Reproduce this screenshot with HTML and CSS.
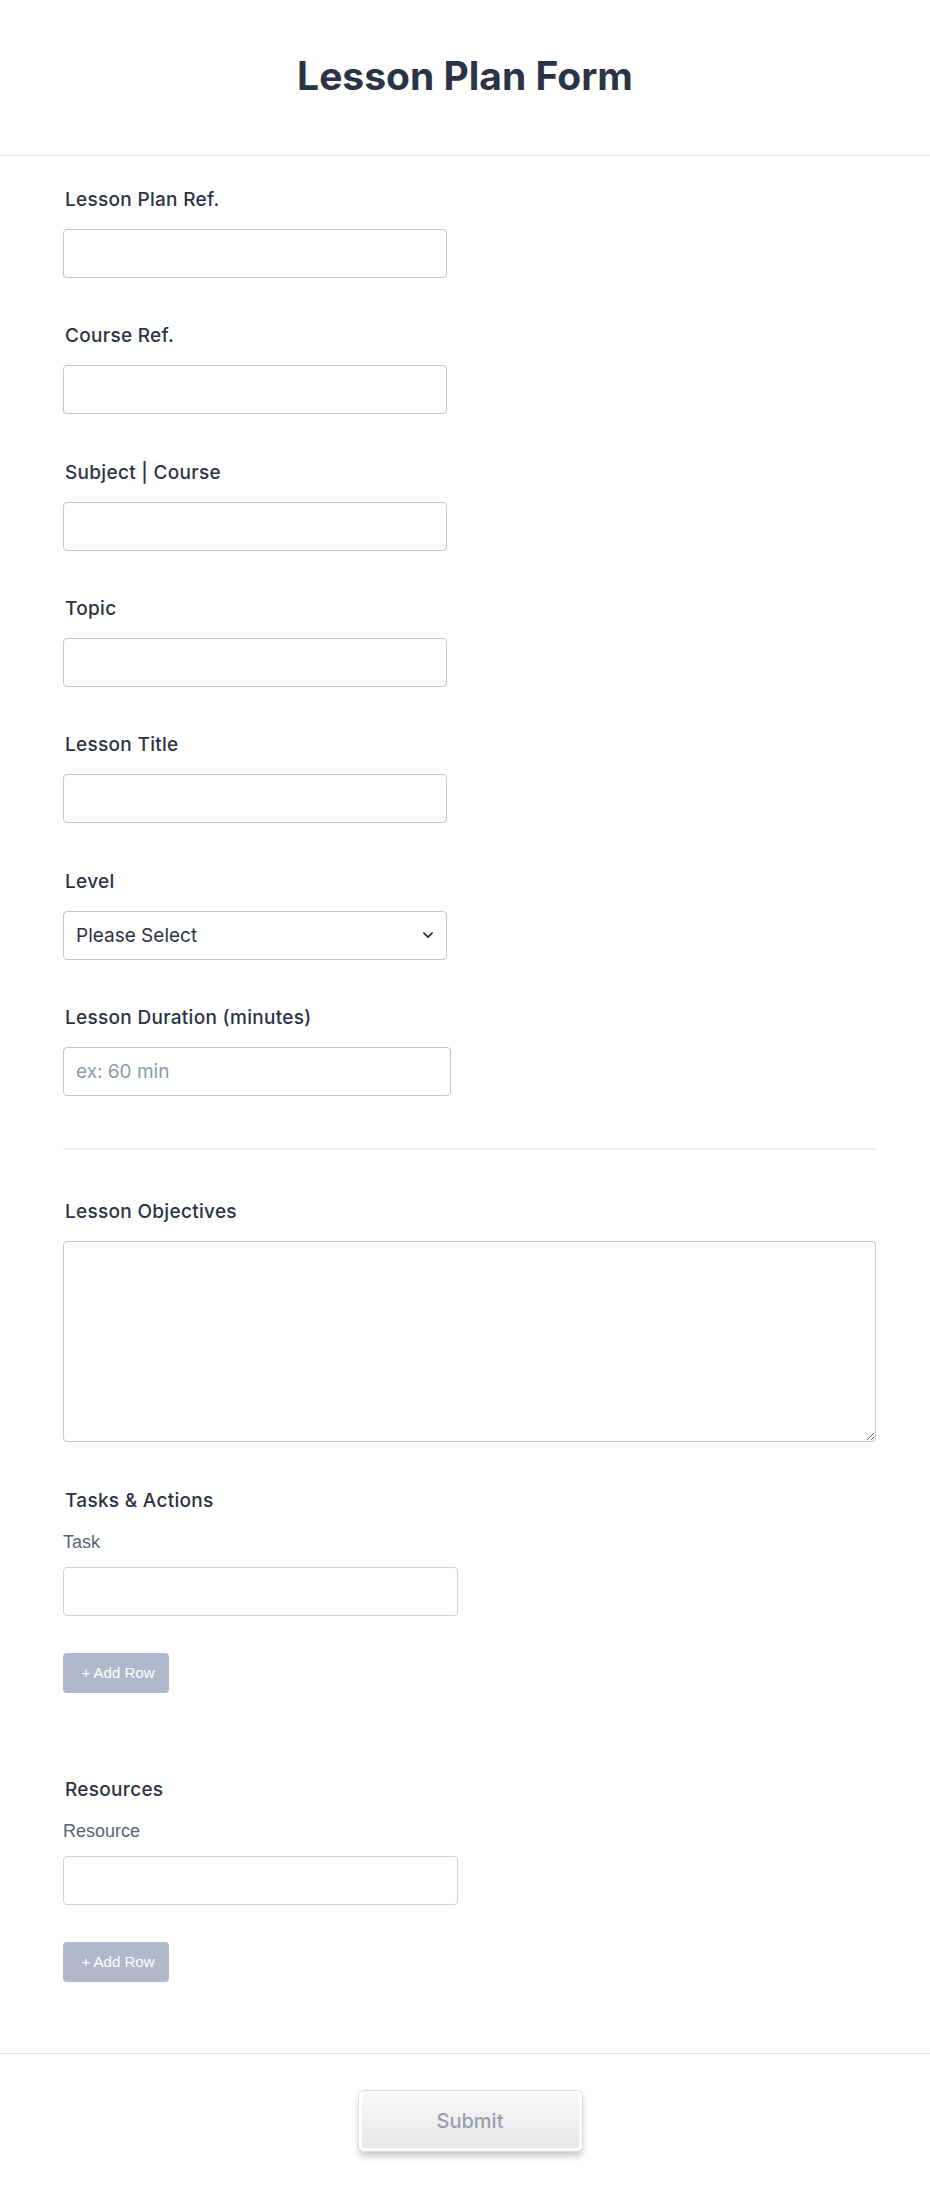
FILE: index.html
```html
<!DOCTYPE html>
<html lang="en">
<head>
<meta charset="utf-8">
<title>Lesson Plan Form</title>
<link rel="stylesheet" href="styles.css">
</head>
<body>
<header class="form-header">
  <h1 class="form-title">Lesson Plan Form</h1>
</header>
<main class="form-body">
  <div class="field">
    <label class="field-label" for="f1">Lesson Plan Ref.</label>
    <input class="text-input" id="f1" type="text">
  </div>
  <div class="field">
    <label class="field-label" for="f2">Course Ref.</label>
    <input class="text-input" id="f2" type="text">
  </div>
  <div class="field">
    <label class="field-label" for="f3">Subject | Course</label>
    <input class="text-input" id="f3" type="text">
  </div>
  <div class="field">
    <label class="field-label" for="f4">Topic</label>
    <input class="text-input" id="f4" type="text">
  </div>
  <div class="field">
    <label class="field-label" for="f5">Lesson Title</label>
    <input class="text-input" id="f5" type="text">
  </div>
  <div class="field">
    <label class="field-label" for="f6">Level</label>
    <div class="select-wrap">
      <select class="select-input" id="f6">
        <option>Please Select</option>
      </select>
      <svg class="chevron" width="10" height="7" viewBox="0 0 10 7" aria-hidden="true">
        <path d="M1 1.2 L5 5.2 L9 1.2" fill="none" stroke="#2c3345" stroke-width="1.8" stroke-linecap="round" stroke-linejoin="round"/>
      </svg>
    </div>
  </div>
  <div class="field field-duration">
    <label class="field-label" for="f7">Lesson Duration (minutes)</label>
    <input class="text-input wide" id="f7" type="text" placeholder="ex: 60 min">
  </div>
  <hr class="divider">
  <div class="field field-objectives">
    <label class="field-label" for="f8">Lesson Objectives</label>
    <textarea class="textarea" id="f8"></textarea>
  </div>
  <div class="list-field tasks">
    <div class="field-label">Tasks &amp; Actions</div>
    <div class="sub-label">Task</div>
    <input class="text-input list-input" type="text">
    <button class="add-row" type="button">+ Add Row</button>
  </div>
  <div class="list-field">
    <div class="field-label">Resources</div>
    <div class="sub-label">Resource</div>
    <input class="text-input list-input" type="text">
    <button class="add-row" type="button">+ Add Row</button>
  </div>
</main>
<footer class="form-footer">
  <button class="submit" type="button">Submit</button>
</footer>
</body>
</html>
```
FILE: styles.css
```css
html, body {
  margin: 0;
  padding: 0;
  background: #ffffff;
}
body {
  font-family: Inter, "Noto Sans", "Liberation Sans", sans-serif;
  color: #2c3345;
}
.form-header {
  padding: 52px 0 55px;
  border-bottom: 1px solid #dfe1e7;
  text-align: center;
}
.form-title {
  margin: 0;
  font-size: 39px;
  line-height: 48px;
  font-weight: 700;
  color: #2c3345;
}
.form-body {
  padding: 32px 54px 71px 63px;
}
.field {
  display: flex;
  flex-direction: column;
  align-items: flex-start;
  gap: 17px;
  margin-bottom: 46.33px;
}
.field-label {
  display: block;
  font-size: 19px;
  line-height: 24px;
  font-weight: 500;
  letter-spacing: 0.3px;
  color: #2c3345;
  padding-left: 2px;
}
.text-input,
.select-input {
  box-sizing: border-box;
  width: 384px;
  height: 49px;
  border: 1px solid #c1c6d3;
  border-radius: 4px;
  background: #fff;
  padding: 0 12px;
  font-family: Inter, "Noto Sans", sans-serif;
  font-size: 19px;
  color: #2c3345;
  margin: 0;
}
.text-input.wide {
  width: 388px;
}
.text-input::placeholder {
  color: #8d9ab1;
}
.select-wrap {
  position: relative;
}
.select-input {
  appearance: none;
  -webkit-appearance: none;
  display: block;
}
.chevron {
  position: absolute;
  right: 14px;
  top: 21px;
}
.field-duration {
  margin-bottom: 52px;
}
.divider {
  margin: 0 0 50px;
  border: 0;
  height: 2px;
  background: #ececf1;
}
.field-objectives {
  margin-bottom: 47px;
}
.textarea {
  box-sizing: border-box;
  width: 813px;
  height: 201px;
  border: 1px solid #c1c6d3;
  border-radius: 4px;
  margin: 0;
  padding: 10px 12px;
  font-family: Inter, sans-serif;
  font-size: 18px;
}
.list-field {
  display: flex;
  flex-direction: column;
  align-items: flex-start;
}
.list-field.tasks {
  margin-bottom: 85px;
}
.sub-label {
  margin-top: 18.6px;
  font-family: "Liberation Sans", Arial, sans-serif;
  font-size: 18px;
  line-height: 20px;
  color: #57647e;
}
.list-input {
  margin-top: 15.4px;
  width: 395px;
  border-color: #cfd1d6;
}
.add-row {
  margin-top: 37px;
  width: 106px;
  height: 40px;
  border: 0;
  border-radius: 4px;
  background: #b0b9cb;
  color: #ffffff;
  font-family: "Liberation Sans", Arial, sans-serif;
  font-size: 15px;
  padding: 0 0 0 4px;
}
.form-footer {
  border-top: 1px solid #e6e7ef;
  padding: 37px 0 49px;
  display: flex;
  justify-content: center;
}
.submit {
  box-sizing: border-box;
  width: 223px;
  height: 60px;
  margin-left: 10px;
  border: 3px solid #ffffff;
  border-radius: 5px;
  background: linear-gradient(#f8f8f9, #e7e7e9);
  box-shadow: 0 0 0 1px #dcdde2, 0 5px 7px rgba(40, 45, 60, 0.28);
  font-family: Inter, sans-serif;
  font-size: 20px;
  font-weight: 500;
  color: #9a9ea9;
}
```
